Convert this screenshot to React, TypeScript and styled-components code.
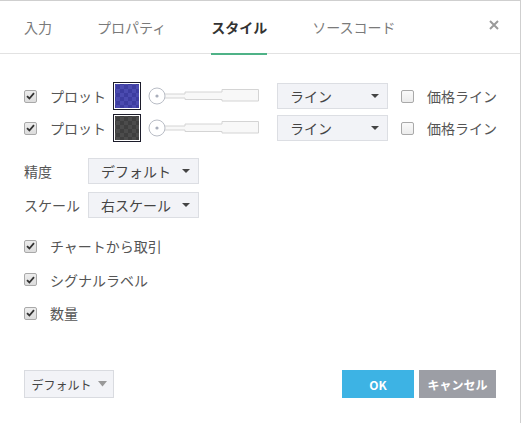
import styled, { createGlobalStyle } from "styled-components"

const GlobalStyle = createGlobalStyle`
body{margin:0;background:#fff;font-family:"Noto Sans CJK JP","Noto Sans",sans-serif;}
svg{display:block;}
`

const Dialog = styled.div`
width:520px;
height:422px;
border-top:1px solid #cfcfcf;
border-right:1px solid #cfcfcf;
background:#fff;
display:flex;
flex-direction:column;
`
const Header = styled.div`
height:52px;
border-bottom:1px solid #e2e2e2;
display:flex;
align-items:stretch;
padding-left:24px;
position:relative;
`
const Tab = styled.div<{ $active?: boolean }>`
position:relative;
display:flex;
align-items:center;
margin-right:45px;
font-size:14px;
font-weight:${p => (p.$active ? 700 : 400)};
color:${p => (p.$active ? "#333" : "#7a7a7a")};
${p => p.$active && `
&:after{content:"";position:absolute;left:0;right:0;bottom:-2px;height:2px;background:#4fb287;}
`}
`
const Close = styled.div`
position:absolute;
right:20px;
top:18px;
width:12px;
height:12px;
`
const Body = styled.div`
flex:1;
padding:28px 0 0 24px;
display:flex;
flex-direction:column;
`
const PlotRow = styled.div`
display:flex;
align-items:center;
height:28px;
margin-bottom:4px;
`
const Label = styled.span<{ $w?: number }>`
font-size:14px;
color:#555;
white-space:nowrap;
${p => p.$w && `width:${p.$w}px;`}
`
const Box = styled.span<{ $checked?: boolean }>`
width:11px;
height:11px;
border:1px solid #a9a9a9;
border-radius:2px;
background:${p => (p.$checked ? "linear-gradient(#ededed,#dcdcdc)" : "linear-gradient(#fafafa,#ececec)")};
display:inline-flex;
align-items:center;
justify-content:center;
margin-right:13px;
flex:none;
`
const Swatch = styled.span<{ $a: string; $b: string }>`
width:26px;
height:26px;
border:1px solid #1c1c2a;
box-shadow:inset 0 0 0 1px #fff;
margin:0 7px 0 7px;
background-color:${p => p.$a};
background-image:
  linear-gradient(45deg,${p => p.$b} 25%,transparent 25%,transparent 75%,${p => p.$b} 75%),
  linear-gradient(45deg,${p => p.$b} 25%,transparent 25%,transparent 75%,${p => p.$b} 75%);
background-size:8px 8px;
background-position:2px 2px,6px 6px;
flex:none;
`
const Select = styled.div<{ $w: number }>`
width:${p => p.$w}px;
height:26px;
box-sizing:border-box;
border:1px solid #dcdee3;
background:#f2f3f7;
display:flex;
align-items:center;
justify-content:space-between;
padding:0 8px 0 12px;
font-size:14px;
color:#444;
flex:none;
`
const Arrow = styled.span`
width:0;
height:0;
border-left:4px solid transparent;
border-right:4px solid transparent;
border-top:4px solid #444;
`
const Gap = styled.span<{ $w: number }>`
width:${p => p.$w}px;
flex:none;
`
const FieldRow = styled.div`
display:flex;
align-items:center;
height:28px;
margin-bottom:6px;
`
const Checks = styled.div`
display:flex;
flex-direction:column;
margin-top:11px;
gap:13.5px;
`
const CheckRow = styled.div`
display:flex;
align-items:center;
height:20px;
`
const Footer = styled.div`
display:flex;
justify-content:space-between;
align-items:center;
padding:0 24px 25px 24px;
`
const Btn = styled.button<{ $bg: string; $fg: string; $w: number; $bd?: string; $bold?: boolean }>`
width:${p => p.$w}px;
height:28px;
border:1px solid ${p => p.$bd || p.$bg};
background:${p => p.$bg};
color:${p => p.$fg};
font-family:inherit;
font-size:12px;
font-weight:${p => (p.$bold ? 700 : 400)};
display:flex;
align-items:center;
justify-content:center;
gap:6px;
padding:0;
`
const BtnGroup = styled.div`
display:flex;
gap:5px;
`

function Check({ checked }: { checked?: boolean }) {
  return (
    <Box $checked={checked}>
      {checked && (
        <svg width="9" height="8" viewBox="0 0 9 8">
          <path d="M1 4.2 L3.4 6.5 L8 1.2" stroke="#333" strokeWidth="1.8" fill="none" />
        </svg>
      )}
    </Box>
  )
}

function Slider() {
  return (
    <svg width="111" height="18" viewBox="0 0 111 18" style={{ flex: "none" }}>
      <path d="M17 7 H37 V5 H74 V2.5 H110.5 V14 H74 V12.5 H37 V11 H17" fill="#f8f8f8" stroke="#d4d4d4" />
      <circle cx="9" cy="9" r="8" fill="#fff" stroke="#b9bdc6" />
      <circle cx="9" cy="9" r="1.6" fill="#a9aebb" />
    </svg>
  )
}

function PlotLine({ a, b }: { a: string; b: string }) {
  return (
    <PlotRow>
      <Check checked />
      <Label>プロット</Label>
      <Swatch $a={a} $b={b} />
      <Slider />
      <Gap $w={18} />
      <Select $w={111}>ライン<Arrow /></Select>
      <Gap $w={13} />
      <Check />
      <Label>価格ライン</Label>
    </PlotRow>
  )
}

export default function App() {
  return (
    <>
      <GlobalStyle />
      <Dialog>
        <Header>
          <Tab>入力</Tab>
          <Tab>プロパティ</Tab>
          <Tab $active>スタイル</Tab>
          <Tab>ソースコード</Tab>
          <Close>
            <svg width="12" height="12" viewBox="0 0 12 12">
              <path d="M2 2 L10 10 M10 2 L2 10" stroke="#9a9a9a" strokeWidth="2" />
            </svg>
          </Close>
        </Header>
        <Body>
          <PlotLine a="#3d3da0" b="#4b4bb0" />
          <PlotLine a="#3f3f3f" b="#4c4c4c" />
          <div style={{ height: 11 }} />
          <FieldRow>
            <Label $w={64}>精度</Label>
            <Select $w={111}>デフォルト<Arrow /></Select>
          </FieldRow>
          <FieldRow>
            <Label $w={64}>スケール</Label>
            <Select $w={111}>右スケール<Arrow /></Select>
          </FieldRow>
          <Checks>
            <CheckRow><Check checked /><Label>チャートから取引</Label></CheckRow>
            <CheckRow><Check checked /><Label>シグナルラベル</Label></CheckRow>
            <CheckRow><Check checked /><Label>数量</Label></CheckRow>
          </Checks>
        </Body>
        <Footer>
          <Btn $bg="#f2f3f7" $fg="#444" $bd="#d9dbe0" $w={90}>
            デフォルト
            <svg width="9" height="6" viewBox="0 0 9 6"><path d="M0 0 H9 L4.5 5.5 Z" fill="#999" /></svg>
          </Btn>
          <BtnGroup>
            <Btn $bg="#3db3e4" $fg="#fff" $w={72} $bold>OK</Btn>
            <Btn $bg="#9c9ea5" $fg="#fff" $w={77} $bold>キャンセル</Btn>
          </BtnGroup>
        </Footer>
      </Dialog>
    </>
  )
}
